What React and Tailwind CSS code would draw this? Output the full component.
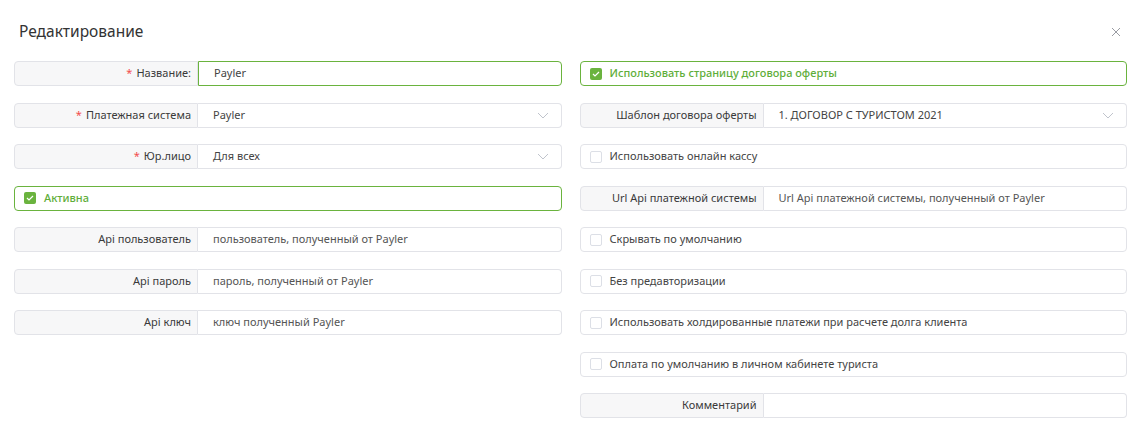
import React from "react";

const font = { fontFamily: '"Noto Sans", "Open Sans", sans-serif' };

function Chevron() {
  return (
    <svg width="12" height="7" viewBox="0 0 12 7" className="shrink-0">
      <path d="M1 1l5 5 5-5" fill="none" stroke="#c0c4cc" strokeWidth="1" />
    </svg>
  );
}

function Field({ label, required, value, placeholder, select, active }) {
  return (
    <div className="flex h-[25px] text-[11px]">
      <div className="w-[184px] shrink-0 flex items-center justify-end pr-[6px] bg-[#f7f7f8] border border-[#e2e3e8] rounded-l-[4px] text-[#3a3a3a]">
        {required && <span className="text-[#f24c4c] mr-[4px]">*</span>}
        {label}
      </div>
      <div
        className={
          "flex-1 flex items-center justify-between pl-[15px] pr-[12px] rounded-r-[4px] border " +
          (active ? "border-[#6ab33e]" : "border-[#e2e3e8] border-l-0")
        }
      >
        <span className={value ? "text-[#444]" : "text-[#555]"}>{value || placeholder}</span>
        {select && <Chevron />}
      </div>
    </div>
  );
}

function Check({ label, checked }) {
  return (
    <div
      className={
        "flex items-center h-[25px] rounded-[4px] border pl-[9px] text-[11px] " +
        (checked ? "border-[#6ab33e] text-[#5fae3a] font-medium" : "border-[#e2e3e8] text-[#444]")
      }
    >
      {checked ? (
        <span className="w-[12px] h-[12px] rounded-[2px] bg-[#6ab33e] flex items-center justify-center mr-[8px]">
          <svg width="8" height="6" viewBox="0 0 8 6">
            <path d="M1 3l2 2 4-4" fill="none" stroke="#fff" strokeWidth="1.2" />
          </svg>
        </span>
      ) : (
        <span className="w-[12px] h-[12px] rounded-[2px] border border-[#dcdfe6] bg-white mr-[8px]" />
      )}
      {label}
    </div>
  );
}

export default function App() {
  return (
    <div className="w-[1139px] h-[429px] bg-white relative" style={font}>
      <div className="flex items-center justify-between pl-[19px] pr-[18px] pt-[22px] h-[61px] pb-[20px]">
        <h1 className="text-[15.5px] text-[#333] font-normal">Редактирование</h1>
        <svg width="10" height="10" viewBox="0 0 10 10">
          <path d="M1 1l8 8M9 1l-8 8" stroke="#9a9ca3" strokeWidth="1" />
        </svg>
      </div>
      <div className="grid grid-cols-2 gap-x-[18px] pl-[14px] pr-[12px]">
        <div className="flex flex-col gap-y-[16.5px]">
          <Field label="Название:" required value="Payler" active />
          <Field label="Платежная система" required value="Payler" select />
          <Field label="Юр.лицо" required value="Для всех" select />
          <Check label="Активна" checked />
          <Field label="Api пользователь" placeholder="пользователь, полученный от Payler" />
          <Field label="Api пароль" placeholder="пароль, полученный от Payler" />
          <Field label="Api ключ" placeholder="ключ полученный Payler" />
        </div>
        <div className="flex flex-col gap-y-[16.5px]">
          <Check label="Использовать страницу договора оферты" checked />
          <Field label="Шаблон договора оферты" value="1. ДОГОВОР С ТУРИСТОМ 2021" select />
          <Check label="Использовать онлайн кассу" />
          <Field label="Url Api платежной системы" placeholder="Url Api платежной системы, полученный от Payler" />
          <Check label="Скрывать по умолчанию" />
          <Check label="Без предавторизации" />
          <Check label="Использовать холдированные платежи при расчете долга клиента" />
          <Check label="Оплата по умолчанию в личном кабинете туриста" />
          <Field label="Комментарий" />
        </div>
      </div>
    </div>
  );
}
